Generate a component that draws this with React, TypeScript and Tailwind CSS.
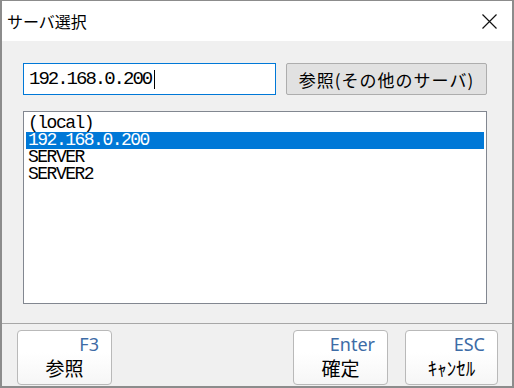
import React from "react";

const servers = ["(local)", "192.168.0.200", "SERVER", "SERVER2"];

function KeyButton({ hotkey, label, w }: { hotkey: string; label: string; w: string }) {
  return (
    <button
      className={`${w} h-[55px] flex flex-col rounded-[4px] border border-[#b9b9b9] bg-gradient-to-b from-white from-40% to-[#f6f6f6]`}
    >
      <div className="h-[25px] w-full pr-[12px] pt-[2px] text-right font-['Noto_Sans',sans-serif] text-[18px] leading-[22px] text-[#3d6ca6]">
        {hotkey}
      </div>
      <div className="w-full text-center font-['Noto_Sans_CJK_JP',sans-serif] text-[19px] font-normal leading-[24px] text-black">
        {label}
      </div>
    </button>
  );
}

export default function App() {
  const selected = 1;
  return (
    <div className="w-[514px] h-[388px] flex flex-col border-x-2 border-t border-b-2 border-[#8c8c8c] bg-[#f0f0f0] overflow-hidden">
      {/* title bar */}
      <div className="h-[40px] shrink-0 flex items-center justify-between bg-white pl-[5px] pr-[15px]">
        <span className="font-['Noto_Sans_CJK_JP',sans-serif] text-[16px] leading-none text-black">サーバ選択</span>
        <svg width="15" height="15" viewBox="0 0 15 15" className="mt-[1px]">
          <path d="M0.5 0.5 L14.5 14.5 M14.5 0.5 L0.5 14.5" stroke="#111" strokeWidth="1.2" />
        </svg>
      </div>

      {/* body */}
      <div className="flex-1 flex flex-col pt-[22px] px-[21px]">
        <div className="flex gap-[10px]">
          <div className="w-[253px] h-[32px] flex items-center border border-[#0078d7] bg-white pl-[5px]">
            <span className="font-['Liberation_Mono',monospace] text-[19px] tracking-[-2px] leading-none text-black">
              192.168.0.200
            </span>
            <span className="ml-[3px] w-px h-[19px] bg-black" />
          </div>
          <button className="w-[201px] h-[32px] flex items-center justify-center rounded-[2px] border border-[#adadad] bg-[#e1e1e1] font-['Noto_Sans_CJK_JP',sans-serif] text-[17px] tracking-[1px] leading-none text-black">
            参照(その他のサーバ)
          </button>
        </div>

        <div className="mt-[16px] w-[464px] h-[193px] border border-[#828790] bg-white px-[2px] pt-[3px]">
          {servers.map((s, i) => (
            <div
              key={s}
              className={`h-[17px] pl-[2px] font-['Liberation_Mono',monospace] text-[18px] tracking-[-1.5px] leading-[17px] ${
                i === selected ? "bg-[#0078d7] text-white" : "text-black"
              }`}
            >
              {s}
            </div>
          ))}
        </div>
      </div>

      {/* footer */}
      <div className="shrink-0 border-t border-[#a7a7a7] h-[63px] flex items-start pt-[6px] pl-[15px] pr-[14px]">
        <KeyButton hotkey="F3" label="参照" w="w-[95px]" />
        <div className="flex-1" />
        <KeyButton hotkey="Enter" label="確定" w="w-[95px]" />
        <div className="w-[17px]" />
        <KeyButton hotkey="ESC" label="ｷｬﾝｾﾙ" w="w-[93px]" />
      </div>
    </div>
  );
}
